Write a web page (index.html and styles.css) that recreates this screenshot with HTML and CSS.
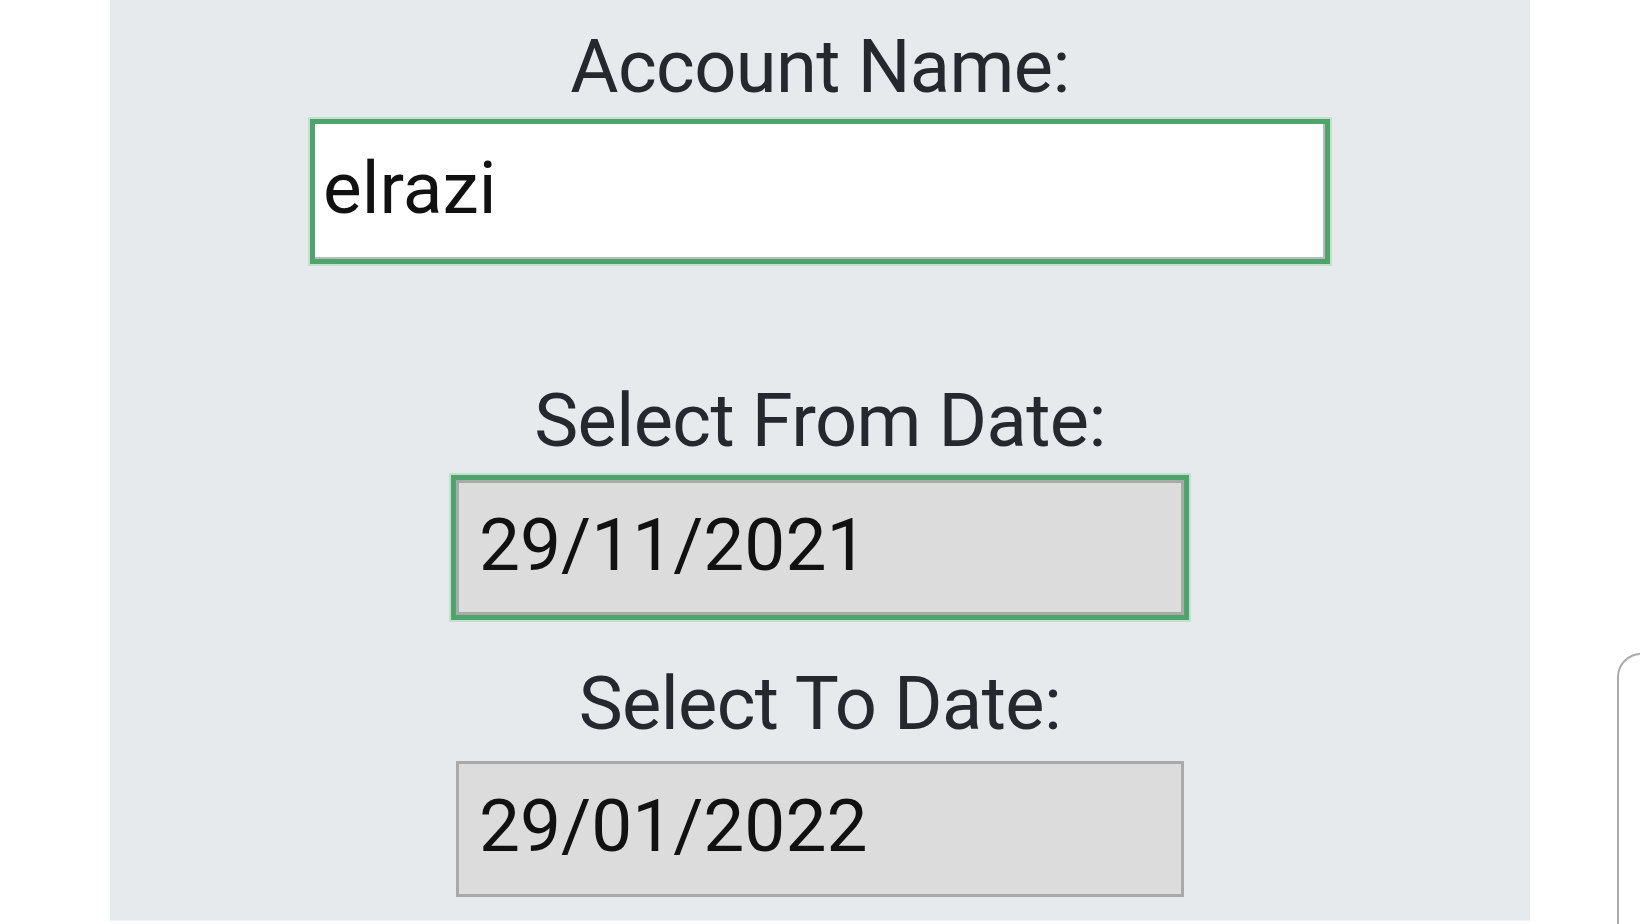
FILE: index.html
```html
<!DOCTYPE html>
<html lang="en">
<head>
<meta charset="utf-8">
<title>Account statement</title>
<link rel="stylesheet" href="styles.css">
</head>
<body>
<main class="panel">
  <label class="label label-account">Account Name:</label>
  <div class="field field-text focused">elrazi</div>
  <label class="label label-from">Select From Date:</label>
  <div class="field field-date focused">29/11/2021</div>
  <label class="label label-to">Select To Date:</label>
  <div class="field field-date">29/01/2022</div>
</main>
<aside class="side-card"></aside>
</body>
</html>
```

FILE: styles.css
```css
html, body {
  margin: 0;
  padding: 0;
  background: #ffffff;
}

body {
  width: 1640px;
  height: 924px;
  overflow: hidden;
  display: flex;
  align-items: flex-start;
  padding-left: 110px;
  box-sizing: border-box;
  font-family: Roboto, "Noto Sans", sans-serif;
}

.panel {
  flex-shrink: 0;
  width: 1420px;
  height: 921px;
  background: #e6eaed;
  border-bottom: 1px solid #eef1f3;
  box-sizing: border-box;
  display: flex;
  flex-direction: column;
  align-items: center;
  padding-top: 23px;
}

.label {
  display: block;
  font-size: 74px;
  line-height: 88px;
  height: 88px;
  letter-spacing: -0.6px;
  color: #25292d;
  text-align: center;
  white-space: nowrap;
}

.label-account { margin-bottom: 13px; }
.label-from { margin-top: 118px; margin-bottom: 15px; }
.label-to { margin-top: 45px; margin-bottom: 13px; }

.field {
  box-sizing: border-box;
  display: flex;
  align-items: center;
  font-size: 73px;
  line-height: 82px;
  color: #111111;
  white-space: nowrap;
  padding-bottom: 6px;
}

.field-text {
  width: 1010px;
  height: 135px;
  background: #ffffff;
  border-style: solid;
  border-width: 0 2px 2px 0;
  border-color: #b9bdb9;
  padding-left: 8px;
}

.field-date {
  width: 728px;
  height: 136px;
  background: #dcdcdc;
  border: 3px solid #a9a9a9;
  padding-left: 20px;
}

.field-date.focused {
  height: 135px;
  border-color: #a8aca8;
}

.focused {
  box-shadow: 0 0 0 5px #4fa36c, 0 0 0 7px rgba(150, 215, 165, 0.45);
}

.side-card {
  flex-shrink: 0;
  margin-left: 87px;
  margin-top: 653px;
  width: 60px;
  height: 300px;
  box-sizing: border-box;
  border-left: 2px solid #ababab;
  border-top: 2px solid #ababab;
  border-top-left-radius: 24px;
  background: #ffffff;
}
```
